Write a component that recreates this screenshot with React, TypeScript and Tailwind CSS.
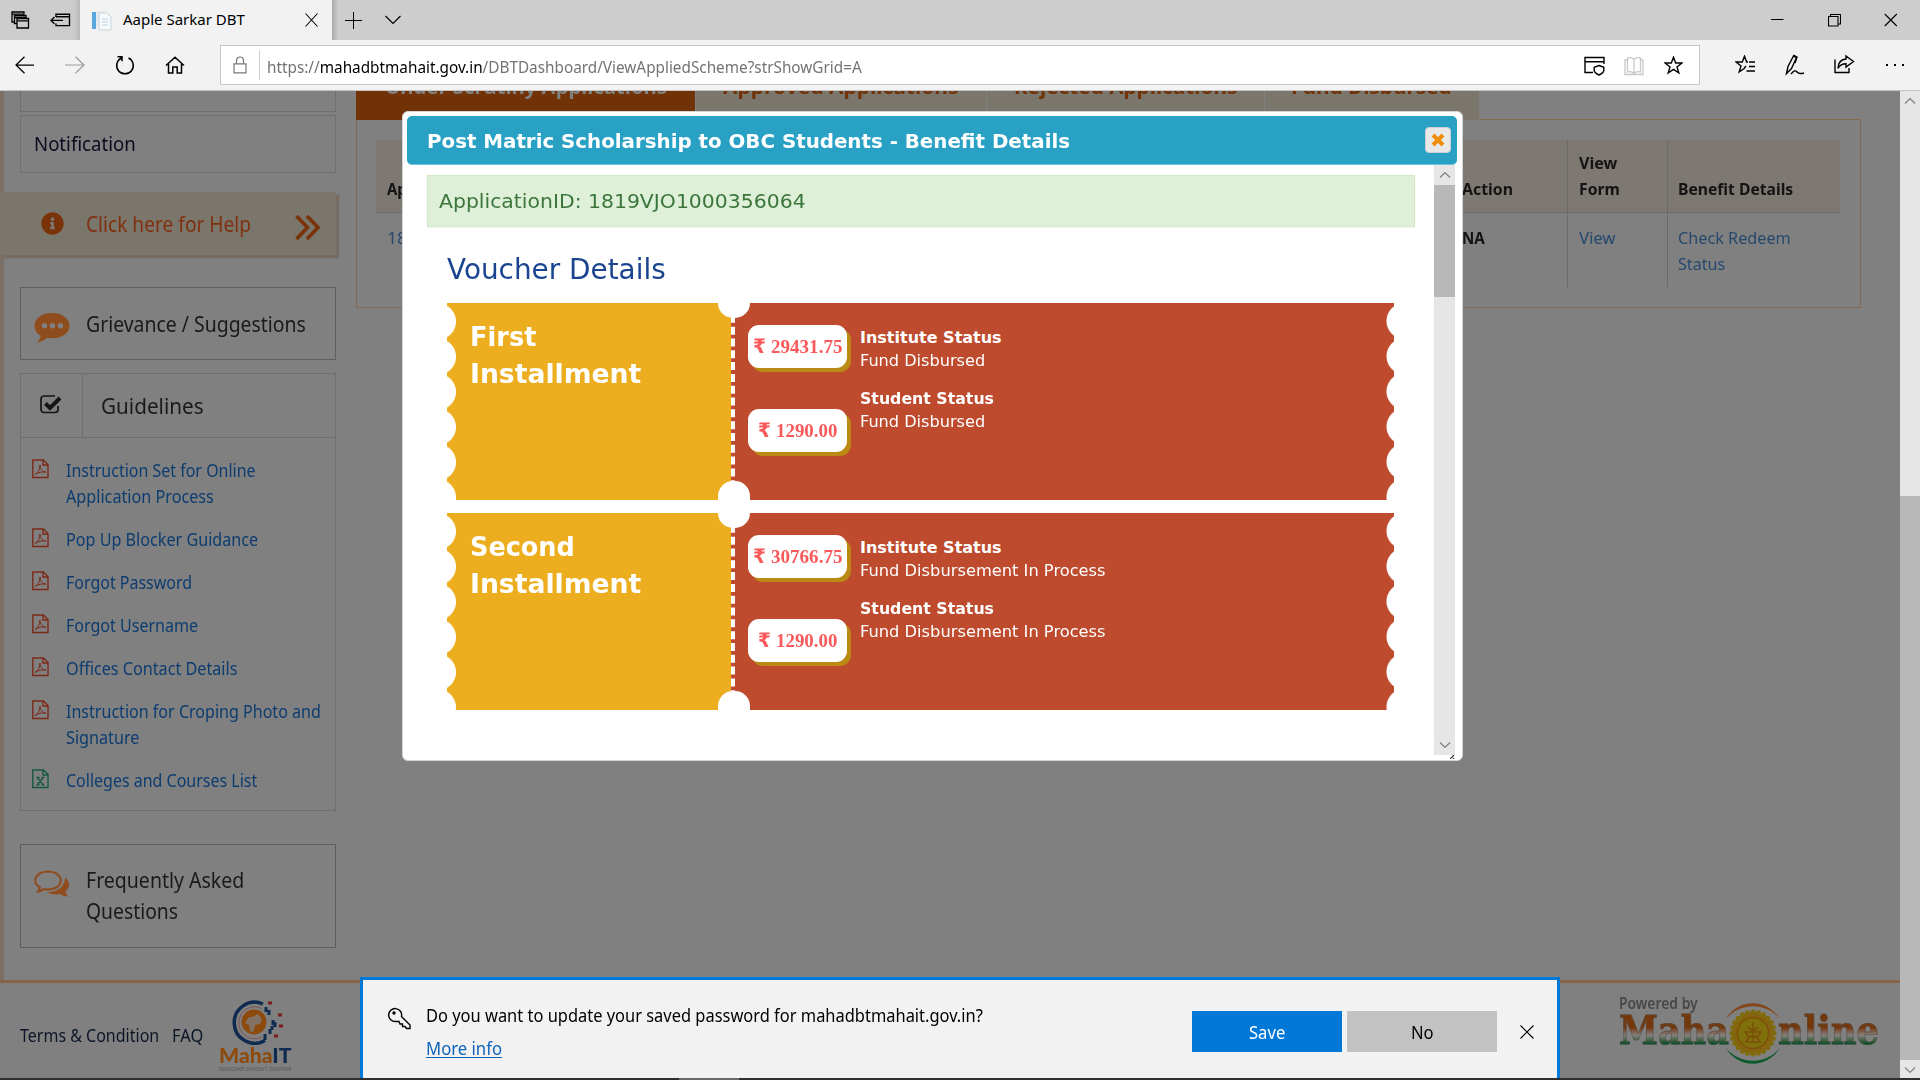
import { useLayoutEffect, useRef, useState } from "react";
import type { ReactNode } from "react";
import { FaCommentDots, FaInfoCircle } from "react-icons/fa";

/* One line of text condensed or widened to a fixed measure. */
function Fit({ w, className = "", children }: { w: number; className?: string; children: ReactNode }) {
  const ref = useRef<HTMLSpanElement>(null);
  const [scale, setScale] = useState(1);
  useLayoutEffect(() => {
    if (ref.current) setScale(w / ref.current.offsetWidth);
  }, [w]);
  return (
    <span className="block whitespace-nowrap" style={{ width: w }}>
      <span ref={ref} className={`inline-block origin-left ${className}`} style={{ transform: `scaleX(${scale})` }}>
        {children}
      </span>
    </span>
  );
}

function Glyph({ w, h, className = "", sw = 1.3, children }: { w: number; h: number; className?: string; sw?: number; children: ReactNode }) {
  return (
    <svg width={w} height={h} viewBox={`0 0 ${w} ${h}`} fill="none" stroke="currentColor" strokeWidth={sw} className={`block shrink-0 ${className}`}>
      {children}
    </svg>
  );
}

function TabStrip() {
  return (
    <div className="flex h-10 shrink-0 bg-[#cdcdcd]">
      <div className="flex w-20 items-start bg-gradient-to-r from-[#cdcdcd] from-92% to-[#b8b8b8] pl-[11px]">
        <Glyph w={19} h={18} className="mt-[11px]" sw={1.3}>
          <path d="M3.500 11H1V1h12v2.500M1 3.200h12" />
          <path d="M6 12.500H3.500V4.500H15V7M3.500 6.500H15" />
          <path d="M6 7.500h11.500V17H6zM6 9.800h11.500" />
        </Glyph>
        <Glyph w={21} h={14} className="ml-5 mt-[13px]" sw={1.4}>
          <path d="M6 4V1.200H19.500V12.600H6V10.500M6 3.800H19.500M1 7.400H13M4.500 4 1 7.400 4.500 10.800" />
        </Glyph>
      </div>
      <div className="flex w-[252px] bg-[#f2f2f2] pl-[11px]">
        <svg width="21" height="22" viewBox="0 0 21 22" className="mt-[10px] shrink-0">
          <path d="M5 1h9v15H5z" fill="#e4eaee" />
          <path d="M8 3h8l4 4v13H8z" fill="#f6fafc" stroke="#c9d3da" />
          <path d="M11 9h6M11 12h6M11 15h6" stroke="#b9d3e4" />
          <path d="M1 2h4v17H1z" fill="#5aa9de" />
        </svg>
        <div className="ml-[11px] w-[182px] text-[15px] leading-[39px] text-black">
          <Fit w={122}>Aaple Sarkar DBT</Fit>
        </div>
        <Glyph w={13} h={14} className="mt-[13px]" sw={1.1}>
          <path d="M.5.5l12 13M12.500.5l-12 13" />
        </Glyph>
      </div>
      <div className="flex flex-1 bg-gradient-to-r from-[#a8a8a8] to-[#cdcdcd] to-[6px] pl-[13px] text-black">
        <Glyph w={17} h={17} className="mt-[12px]" sw={1}>
          <path d="M0 8.500h17M8.500 0v17" />
        </Glyph>
        <Glyph w={16} h={10} className="ml-[23px] mt-[15px]" sw={1.2}>
          <path d="M.5 1 8 8.500 15.500 1" />
        </Glyph>
        <div className="ml-auto flex pr-[22px] pt-[13px]">
          <Glyph w={13} h={14} className="mr-[44px]" sw={1}>
            <path d="M0 6.500h12.500" />
          </Glyph>
          <Glyph w={13} h={14} className="mr-[43px]" sw={1.1}>
            <path d="M.5 3.500h9.500V13H.5zM2.500 3.500V1.500H12.500V11H10" />
          </Glyph>
          <Glyph w={14} h={14} sw={1.1}>
            <path d="M.8 1l12 12M12.800 1l-12 12" />
          </Glyph>
        </div>
      </div>
    </div>
  );
}

const STAR = "M9.500 1.200 11.700 7h6.200l-4.900 3.900 1.800 6-5.300-3.600-5.300 3.600 1.800-6L1.100 7h6.200z";

function AddressBar() {
  return (
    <div className="flex h-[51px] shrink-0 items-start border-b border-[#c4c4c4] bg-[#f2f2f2] pl-[15px] text-black">
      <Glyph w={20} h={18} className="mt-4" sw={1.25}>
        <path d="M1 9h18M9.500.8 1 9l8.500 8.200" />
      </Glyph>
      <Glyph w={20} h={18} className="ml-[30px] mt-4 text-[#9b9b9b]" sw={1.2}>
        <path d="M0 9h19M10.500.8 19 9l-8.500 8.200" />
      </Glyph>
      <Glyph w={20} h={20} className="ml-[30px] mt-[15px]" sw={1.5}>
        <path d="M6.500 3A8.300 8.300 0 1 0 13.500 3M2.500 1.800H7v4.500" />
      </Glyph>
      <Glyph w={20} h={18} className="ml-[30px] mt-[16px]" sw={1.5}>
        <path d="M1 9.500 10 1.300l9 8.200M3.500 8v9h4.300v-6h4.400v6h4.300V8" />
      </Glyph>
      <div className="ml-[35px] mt-[5px] flex h-10 w-[1480px] border border-[#c6c6c6] bg-white pl-3">
        <Glyph w={14} h={18} className="mt-[10px] text-[#777]" sw={1.2}>
          <path d="M1 7.800h12v9H1zM3.500 7.800V4.500a3.500 3.500 0 0 1 7 0v3.300" />
        </Glyph>
        <div className="ml-3 mt-1 h-[30px] w-px bg-[#cfcfcf]" />
        <div className="ml-[7px] flex-1 text-[16px] leading-[42px] text-[#737373]">
          <Fit w={595}>
            https://<span className="text-black">mahadbtmahait.gov.in</span>/DBTDashboard/ViewAppliedScheme?strShowGrid=A
          </Fit>
        </div>
        <Glyph w={21} h={20} className="mt-[10px]" sw={1.4}>
          <path d="M9 16.500H1V1.500h19V8M1 5.800h19M15 9.500l4.800 1.800v3c0 2-2 3.500-4.800 4.700-2.800-1.200-4.800-2.700-4.800-4.700v-3z" />
        </Glyph>
        <Glyph w={20} h={20} className="ml-[19px] mt-[10px] text-[#c8c8c8]" sw={1.3}>
          <path d="M10 3.500V18M10 3.500C8 1.500 5.500 1.500 3.500 2v14c2-.5 4.500-.5 6.500 1.500 2-2 4.500-2 6.500-1.500V2c-2-.5-4.500-.5-6.500 1.500M3 4H1v14.500h18V4h-2" />
        </Glyph>
        <Glyph w={19} h={19} className="ml-5 mr-4 mt-[10px]" sw={1.4}>
          <path d={STAR} />
        </Glyph>
      </div>
      <Glyph w={20} h={20} className="ml-[35px] mt-[15px]" sw={1.4}>
        <path d="M14 7h6M14 11.500h6M11.500 16h8.500M13 7h-1.300L9.500 1.200 7.300 7H1.100L6 10.900l-1.800 6 5-3.400 1.800-2.600" />
      </Glyph>
      <Glyph w={20} h={22} className="ml-[30px] mt-[14px]" sw={1.4}>
        <path d="M1.500 19.500 3 12.500 8.500 2l3 1.500L6.500 14.500zM8.500 1l3.500 2-2 6M6 20c3-3.500 4.500-4 6-2s3.500 2 7 1" />
      </Glyph>
      <Glyph w={21} h={20} className="ml-[29px] mt-[14px]" sw={1.4}>
        <path d="M1 5.500V18.500H15V14M12 2l7.500 5.500L12 13V9.800c-4 0-6 1-8 4.500.3-6 3.500-9 8-9.300z" />
      </Glyph>
      <div className="ml-[31px] mt-[24px] flex gap-[6px]">
        <i className="h-[2px] w-[2px] bg-black" />
        <i className="h-[2px] w-[2px] bg-black" />
        <i className="h-[2px] w-[2px] bg-black" />
      </div>
    </div>
  );
}

function FileIcon({ kind }: { kind: string }) {
  return (
    <svg width="17" height="20" viewBox="0 0 17 20" fill="none" className={`mt-[2px] shrink-0 ${kind === "xls" ? "text-[#14593f]" : "text-[#7c2a18]"}`} stroke="currentColor" strokeWidth="1.4">
      <path d="M.8 1h10.700L16 5.500V18.500H.8zM11 1v5h5" />
      {kind === "xls" ? (
        <path d="M5.500 8.800 11 15.500M11 8.800 5.500 15.500M4.500 8.500h3M9.500 8.500h3M4.500 15.700h3M9.500 15.700h3" />
      ) : (
        <path strokeWidth="1" d="M3 15.500c3-1.500 5-5 5-9.500.2 4 2 6.500 6 7.200-4-.7-7.500 0-11 2.300" />
      )}
    </svg>
  );
}

const guides: { kind: string; lines: [string, number][] }[] = [
  { kind: "pdf", lines: [["Instruction Set for Online", 190], ["Application Process", 148]] },
  { kind: "pdf", lines: [["Pop Up Blocker Guidance", 192]] },
  { kind: "pdf", lines: [["Forgot Password", 126]] },
  { kind: "pdf", lines: [["Forgot Username", 132]] },
  { kind: "pdf", lines: [["Offices Contact Details", 171]] },
  { kind: "pdf", lines: [["Instruction for Croping Photo and", 255], ["Signature", 73]] },
  { kind: "xls", lines: [["Colleges and Courses List", 191]] },
];

function Sidebar() {
  return (
    <aside className="flex w-[340px] shrink-0 flex-col text-[#1a1a1a]">
      <div className="flex flex-col border-l-4 border-[#7b6f66] pl-4">
        <div className="h-[21px] w-[316px] border border-t-0 border-[#6f6f6f]" />
        <div className="mt-[3px] h-[58px] w-[316px] border border-[#6f6f6f] pl-[13px] text-[19.500px] leading-[56px] text-[#0b0b20]">
          <Fit w={102}>Notification</Fit>
        </div>
      </div>
      <div className="h-[19px] border-l-4 border-[#7b6f66]" />
      <div className="flex h-[63px] w-[336px] bg-[#7b766c] pl-[41px] text-[#7a3208] shadow-[3px_3px_1px_#776b61]">
        <FaInfoCircle className="mt-5 h-[23px] w-[23px]" />
        <div className="ml-[22px] w-[209px] text-[21px] leading-[65px] text-[#80300f]">
          <Fit w={165}>Click here for Help</Fit>
        </div>
        <Glyph w={26} h={27} className="mt-[22px]" sw={3.600}>
          <path d="M1.500 2 12.500 13.500 1.500 25M12 2l11 11.500L12 25" />
        </Glyph>
      </div>
      <div className="flex flex-col border-l-4 border-[#7b6f66] pl-4">
        <div className="mt-8 flex h-[73px] w-[316px] border border-[#5f5f5f] pl-[13px]">
          <svg width="36" height="30" viewBox="0 0 36 30" className="mt-[25px] shrink-0" fill="#8f4c1c">
            <path d="M18 0C28 0 35.500 5.500 35.500 12.700S28 25.300 18 25.300c-1.700 0-3.400-.2-5-.5-2.300 2.400-5.500 4-10 4.700 2-1.900 3.200-4 3.700-6.700C2.800 20.500.5 16.900.5 12.700.5 5.500 8 0 18 0z" />
            <path d="M10.500 10a2.700 2.700 0 1 1 0 5.400 2.700 2.700 0 0 1 0-5.400zM18.500 10a2.700 2.700 0 1 1 0 5.400 2.700 2.700 0 0 1 0-5.400zM26.500 10a2.700 2.700 0 1 1 0 5.400 2.700 2.700 0 0 1 0-5.400z" fill="#808080" />
          </svg>
          <div className="ml-4 text-[21px] leading-[72px]">
            <Fit w={220}>Grievance / Suggestions</Fit>
          </div>
        </div>
        <div className="mt-[13px] h-[438px] w-[316px] border border-[#6f6f6f]">
          <div className="flex h-16 border-b border-[#6f6f6f]">
            <div className="w-[62px] border-r border-[#6f6f6f] pl-[19px] pt-[20px]">
              <svg width="23" height="22" viewBox="0 0 23 22" fill="none" stroke="#151515">
                <path d="M18 12v3.500a3 3 0 0 1-3 3H4a3 3 0 0 1-3-3V5a3 3 0 0 1 3-3h11" strokeWidth="1.700" />
                <path d="m5.500 9.500 4.500 4.500L20 4" strokeWidth="4" />
              </svg>
            </div>
            <div className="pl-[18px] text-[21.500px] leading-[64px]">
              <Fit w={103}>Guidelines</Fit>
            </div>
          </div>
          <div className="flex flex-col gap-[17px] pl-[11px] pt-[19px] text-[17.500px] leading-[26px] text-[#0c3c70]">
            {guides.map((g) => (
              <div key={g.lines[0][0]} className="flex gap-[17px]">
                <FileIcon kind={g.kind} />
                <div>
                  {g.lines.map(([text, w]) => (
                    <Fit key={text} w={w}>{text}</Fit>
                  ))}
                </div>
              </div>
            ))}
          </div>
        </div>
        <div className="mt-[33px] flex h-[104px] w-[316px] border border-[#5f5f5f] pl-[13px]">
          <svg width="36" height="30" viewBox="0 0 36 30" className="mt-[25px]">
            <path d="M31 7.500c5 4 5.500 10 .5 14 .2 2 1.300 3.500 3 5-3.500 0-6-.8-8.500-2.500-5 1-10 .3-13-2 10 .5 18-5 18-14.500z" fill="#8f4c1c" />
            <path d="M14 1.500c7.500 0 12.700 4 12.700 9s-5.200 9-12.700 9c-1.500 0-2.700-.1-4-.5-2 1.700-3.700 2.300-6 2.500 1-1.200 1.800-2.500 2-4-3-1.700-4.700-4-4.700-7 0-5 5.200-9 12.700-9z" fill="#808080" stroke="#8f4c1c" strokeWidth="2" />
          </svg>
          <div className="ml-4 mt-[20px] text-[21px] leading-[31px]">
            <Fit w={158}>Frequently Asked</Fit>
            <Fit w={92}>Questions</Fit>
          </div>
        </div>
        <div className="h-8" />
      </div>
    </aside>
  );
}

function SchemeTable() {
  return (
    <main className="ml-4 flex w-[1505px] flex-col text-[#141414]">
      <div className="relative flex h-[29px] gap-px overflow-hidden text-[20px] font-bold leading-[8px] text-[#703206]">
        <div className="-mt-2 h-[38px] w-[339px] bg-[#703206] pl-[29px] text-[#808080]"><Fit w={282}>Under Scrutiny Applications</Fit></div>
        <div className="-mt-2 h-[38px] w-[290px] bg-[#7b766c] pl-[27px]"><Fit w={236}>Approved Applications</Fit></div>
        <div className="-mt-2 h-[38px] w-[277px] bg-[#7b766c] pl-[27px]"><Fit w={223}>Rejected Applications</Fit></div>
        <div className="-mt-2 h-[38px] w-[214px] bg-[#7b766c] pl-[26px]"><Fit w={161}>Fund Disbursed</Fit></div>
      </div>
      <div className="-mt-px h-[189px] border border-[#86684f] pl-[19px] pt-5 text-[16.500px] leading-[26px]">
        <div className="flex h-[73px] w-[1464px] items-end rounded-t border-b border-[#6b6b6b] bg-[#7d7871] font-bold">
          <div className="h-[36px] w-[1086px] pl-[11px]"><Fit w={105}>Application ID</Fit></div>
          <div className="flex h-full w-[106px] items-end border-r border-[#6b6b6b]"><div className="h-[36px]"><Fit w={51}>Action</Fit></div></div>
          <div className="flex h-full w-[100px] items-end border-r border-[#6b6b6b] pl-[11px]">
            <div className="h-[62px]"><Fit w={38}>View</Fit><Fit w={41}>Form</Fit></div>
          </div>
          <div className="h-[36px] pl-[10px]"><Fit w={115}>Benefit Details</Fit></div>
        </div>
        <div className="flex h-[74px] w-[1464px] text-[#26486d]">
          <div className="w-[1086px] pl-[11px] pt-[12px]"><Fit w={170}>1819VJO1000356064</Fit></div>
          <div className="w-[106px] border-r border-[#6b6b6b] pt-[12px] font-bold text-[#141414]"><Fit w={23}>NA</Fit></div>
          <div className="w-[100px] border-r border-[#6b6b6b] pl-[11px] pt-[12px]"><Fit w={36}>View</Fit></div>
          <div className="pl-[10px] pt-[12px]"><Fit w={113}>Check Redeem</Fit><Fit w={47}>Status</Fit></div>
        </div>
      </div>
    </main>
  );
}

function MahaITLogo() {
  return (
    <div className="flex w-[73px] flex-col items-center">
      <svg width="52" height="45" viewBox="0 0 52 45" fill="none" className="ml-[5px]">
        <path d="M31 4A20.500 20.500 0 1 0 33 40.500" stroke="#0f2c50" strokeWidth="3.500" />
        <path d="M30 8.500A16 16 0 1 0 30 37" stroke="#7c4a44" strokeWidth=".8" />
        <circle cx="22" cy="22" r="12.500" fill="#8d4a0c" />
        <path d="M17 17c4 1 6-2 9-3l4 5-2 5-5 1-1 6-4 1-1-7-4-2z" fill="#808080" opacity=".75" />
        <path d="M34 7v5M37 10v5M41 20v5M43 22v5M38 29v5M33 34v6M40 26v4" stroke="#0f2c50" strokeWidth="3" />
        <path d="M36 3h4M46 15h4M47 26h4M42 36h4" stroke="#7d1c1c" strokeWidth="3" />
      </svg>
      <div className="-mt-[1px] font-[Lato] text-[20px] font-black leading-[22px] text-[#8d4a0c]">
        <Fit w={73}>Maha<span className="text-[#0f2c50]">IT</span></Fit>
      </div>
      <div className="text-[6px] leading-[7px] text-[#5a5a5a]"><Fit w={73}>IMAGINE INVENT INSPIRE</Fit></div>
    </div>
  );
}

const beads = Array.from({ length: 24 }, (_, i) => (i * Math.PI) / 12);

function MahaOnlineLogo() {
  return (
    <div className="relative h-[72px] w-[261px]">
      <div className="text-[16px] font-semibold leading-[15px] text-[#474747]"><Fit w={79}>Powered by</Fit></div>
      <div className="-mt-[3px] flex font-['DejaVu_Serif'] text-[40px] font-bold leading-[44px]">
        <div className="w-[159px]">
          <Fit w={110} className="bg-gradient-to-b from-[#75380a] from-45% via-[#85807c] via-62% to-[#0a4f27] to-80% bg-clip-text text-transparent [-webkit-text-stroke:1px_#4d4d4d80]">Maha</Fit>
        </div>
        <Fit w={101} className="bg-gradient-to-b from-[#75380a] from-45% via-[#85807c] via-62% to-[#0a4f27] to-80% bg-clip-text text-transparent [-webkit-text-stroke:1px_#4d4d4d80]">nline</Fit>
      </div>
      <svg width="58" height="66" viewBox="0 0 58 66" fill="none" className="absolute left-[105px] top-[5px]">
        <path d="M2 18C14-3 43-3 56 18 42 1 16 1 2 18z" fill="#84451b" />
        <path d="M2 47c12 21 41 21 54 0-14 17-40 17-54 0z" fill="#0d5a2c" />
        <circle cx="29" cy="32" r="20.500" fill="#876210" />
        {beads.map((a) => (
          <circle key={a} cx={29 + Math.cos(a) * 21} cy={32 + Math.sin(a) * 21} r="2.500" fill="#806b0c" />
        ))}
        <circle cx="29" cy="32" r="15.500" fill="#80700c" stroke="#7a5208" strokeWidth="1.500" />
        <path d="M29 21v19M24 26l5 4 5-4M21 31h16l-3 4H24zM25 36h8l3 5H22z" stroke="#7a4f08" strokeWidth="1.500" />
      </svg>
    </div>
  );
}

function Footer() {
  return (
    <footer className="flex h-[98px] border-t-[3px] border-[#86644a] pl-5 text-[17.500px] text-[#0c1526]">
      <div className="pt-[39px] leading-[26px]"><Fit w={139}>Terms &amp; Condition</Fit></div>
      <div className="ml-[13px] pt-[39px] leading-[26px]"><Fit w={31}>FAQ</Fit></div>
      <div className="ml-4 pt-[17px]"><MahaITLogo /></div>
      <div className="ml-auto pr-5 pt-[13px]"><MahaOnlineLogo /></div>
    </footer>
  );
}

function Arrow({ up = false, className = "" }: { up?: boolean; className?: string }) {
  return (
    <Glyph w={12} h={8} className={`text-[#808080] ${className}`} sw={1.2}>
      <path d={up ? "M1 6.500 6 1.500l5 5" : "M1 1.500l5 5 5-5"} />
    </Glyph>
  );
}

function Amount({ value, w }: { value: string; w: number }) {
  return (
    <div className="flex h-[43px] w-[99px] items-center justify-center gap-[5px] rounded-[11px] bg-white font-['Liberation_Serif'] text-[18px] font-bold text-[#f9595a] shadow-[4px_4px_0_#ba8a15]">
      <div className="-mt-[2px] font-['DejaVu_Sans'] text-[20px] leading-[38px]"><Fit w={13}>₹</Fit></div>
      <div className="mt-[2px]"><Fit w={w}>{value}</Fit></div>
    </div>
  );
}

interface Installment {
  name: string;
  nameWidth: number;
  institute: string;
  status: string;
  statusWidth: number;
}

const installments: Installment[] = [
  { name: "First", nameWidth: 66, institute: "29431.75", status: "Fund Disbursed", statusWidth: 125 },
  { name: "Second", nameWidth: 105, institute: "30766.75", status: "Fund Disbursement In Process", statusWidth: 246 },
];

function Ticket({ item }: { item: Installment }) {
  return (
    <div className="relative flex h-[197px] w-[947px] overflow-hidden text-white">
      <div className="w-[284px] bg-[#ecae1e] bg-[radial-gradient(circle_at_-9px_18.500px,white_17.500px,transparent_18.500px)] bg-[length:14px_35.200px] bg-repeat-y pl-[23px] pt-[16px] text-[26px] font-bold leading-[37px]">
        <Fit w={item.nameWidth}>{item.name}</Fit>
        <Fit w={171}>Installment</Fit>
      </div>
      <div className="flex flex-1 border-l-4 border-dashed border-white bg-[#be4b2e] bg-[radial-gradient(circle_at_24.500px_18px,white_17.500px,transparent_18.500px)] bg-[length:14px_35.200px] bg-right-top bg-repeat-y pl-[13px]">
        <div className="flex flex-col gap-[41px] pt-[22px]">
          <Amount value={item.institute} w={72} />
          <Amount value="1290.00" w={62} />
        </div>
        <div className="ml-[13px] flex flex-col pt-[23px] text-[16px] leading-[23px]">
          <div className="font-bold"><Fit w={142}>Institute Status</Fit></div>
          <Fit w={item.statusWidth}>{item.status}</Fit>
          <div className="mt-[15px] font-bold"><Fit w={134}>Student Status</Fit></div>
          <Fit w={item.statusWidth}>{item.status}</Fit>
        </div>
      </div>
      <div className="absolute left-[271px] top-0 h-[15px] w-8 rounded-b-[15px] bg-white" />
      <div className="absolute bottom-0 left-[271px] h-[19px] w-8 rounded-t-[15px] bg-white" />
    </div>
  );
}

function BenefitDialog() {
  return (
    <div className="absolute left-[402px] top-[111px] flex h-[650px] w-[1061px] flex-col rounded-md border border-[#d5d5d5] bg-white py-1 pl-1 pr-[5px] font-['DejaVu_Sans']">
      <div className="flex h-[49px] shrink-0 justify-between rounded-[5px] border-b border-[#6fc0d8] bg-[#29a1c5] pl-5 pr-[6px] pt-[11px] text-[20px] font-bold leading-[48px] text-white">
        <div className="-mt-[10px]"><Fit w={643}>Post Matric Scholarship to OBC Students - Benefit Details</Fit></div>
        <div className="flex h-[26px] w-[26px] items-center justify-center rounded border border-[#cfcfcf] bg-[#e8e8e8]">
          <Glyph w={14} h={14} className="text-[#ef8c08]" sw={4}>
            <path d="M2 2l10 10M12 2 2 12" />
          </Glyph>
        </div>
      </div>
      <div className="flex h-[590px] shrink-0 justify-between pr-[2px]">
        <div className="ml-5 w-[988px] pt-[10px]">
          <div className="h-[52px] border border-[#d3e8c5] bg-[#dff0d8] pl-[11px] text-[20px] leading-[51px] text-[#3c763d] shadow-[0_1px_2px_#0000000d]">
            <Fit w={367}>ApplicationID: 1819VJO1000356064</Fit>
          </div>
          <div className="ml-5 mt-[19px] h-[57px] text-[28px] leading-[48px] text-[#1a4490]"><Fit w={219}>Voucher Details</Fit></div>
          <div className="ml-5 flex flex-col gap-[13px]">
            {installments.map((i) => (
              <Ticket key={i.name} item={i} />
            ))}
          </div>
        </div>
        <div className="flex w-[21px] flex-col items-center bg-[#e6e6e6]">
          <Arrow up className="mt-[6px]" />
          <div className="mt-[6px] h-[112px] w-full shrink-0 bg-[#b8b8b8]" />
          <Arrow className="mb-[6px] mt-auto" />
        </div>
      </div>
      <Glyph w={5} h={4} className="ml-auto mr-[2px] text-[#333]" sw={1.200}>
        <path d="M0 4 4 0M3 4l1-1" />
      </Glyph>
    </div>
  );
}

function PasswordPrompt() {
  return (
    <div className="absolute left-[360px] top-[977px] flex h-[101px] w-[1200px] border-[3px] border-b-0 border-[#0078d7] bg-[#f2f2f2] pl-[25px] text-[18px] text-black">
      <Glyph w={23} h={23} className="mt-[27px]" sw={1.400}>
        <path d="M13.500 9.500a6.500 6.500 0 1 0-5.500 5l3 0 1 2.500h2.500v2.500H17l1.500 2H22V18z" />
        <circle cx="6" cy="6" r="1" fill="currentColor" />
      </Glyph>
      <div className="ml-[15px] pt-[19px] leading-[33px]">
        <Fit w={557}>Do you want to update your saved password for mahadbtmahait.gov.in?</Fit>
        <Fit w={76} className="text-[#0f62b9] underline underline-offset-2">More info</Fit>
      </div>
      <div className="ml-auto flex pr-[23px] pt-[31px] leading-[43px]">
        <div className="flex h-[41px] w-[150px] justify-center bg-[#0078d7] text-white"><Fit w={36}>Save</Fit></div>
        <div className="ml-[5px] flex h-[41px] w-[150px] justify-center bg-[#c2c2c2]"><Fit w={23}>No</Fit></div>
        <Glyph w={14} h={14} className="ml-[23px] mt-[14px]" sw={1.1}>
          <path d="M.5.5l13 13M13.500.5l-13 13" />
        </Glyph>
      </div>
    </div>
  );
}

export default function App() {
  return (
    <div className="relative flex h-[1080px] w-[1920px] flex-col overflow-hidden bg-[#808080] font-['Noto_Sans',sans-serif]">
      <TabStrip />
      <AddressBar />
      <div className="flex h-[987px] shrink-0">
        <div className="flex w-[1900px] flex-col">
          <div className="flex h-[889px]">
            <Sidebar />
            <SchemeTable />
          </div>
          <Footer />
        </div>
        <div className="flex w-5 flex-col items-center bg-[#e6e6e6]">
          <Arrow up className="mt-[6px]" />
          <div className="mt-[391px] h-[564px] w-full bg-[#b8b8b8]" />
          <Arrow className="mt-[6px]" />
        </div>
      </div>
      <div className="flex h-[2px] bg-[#2f2f2f]">
        <div className="ml-[679px] w-[60px] bg-[#6a6a6a]" />
      </div>
      <BenefitDialog />
      <PasswordPrompt />
    </div>
  );
}
